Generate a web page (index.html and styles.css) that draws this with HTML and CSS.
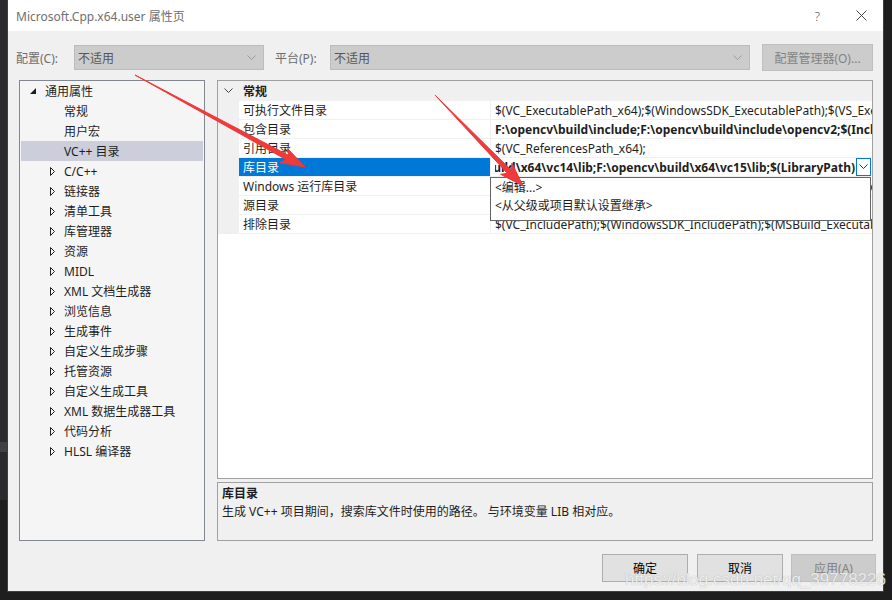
FILE: index.html
```html
<!DOCTYPE html>
<html lang="zh-CN">
<head>
<meta charset="utf-8">
<title>Microsoft.Cpp.x64.user 属性页</title>
<link rel="stylesheet" href="styles.css">
</head>
<body>
<div class="screen">
  <div class="strip-left"></div>
  <div class="dialog">
    <div class="titlebar">
      <span class="title">Microsoft.Cpp.x64.user 属性页</span>
      <span class="help">?</span>
      <svg class="close" width="11" height="11" viewBox="0 0 11 11"><path d="M0.5 0.5 L10.5 10.5 M10.5 0.5 L0.5 10.5" stroke="#444" stroke-width="1" fill="none"/></svg>
    </div>
    <div class="body">
      <div class="config-row">
        <span class="label lbl-config">配置(C):</span>
        <div class="combo combo-config"><span>不适用</span><svg class="chev" width="9" height="6" viewBox="0 0 9 6"><path d="M0.5 0.5 L4.5 4.5 L8.5 0.5" stroke="#9a9a9a" fill="none"/></svg></div>
        <span class="label lbl-platform">平台(P):</span>
        <div class="combo combo-platform"><span>不适用</span><svg class="chev" width="9" height="6" viewBox="0 0 9 6"><path d="M0.5 0.5 L4.5 4.5 L8.5 0.5" stroke="#9a9a9a" fill="none"/></svg></div>
        <div class="btn btn-disabled btn-manager">配置管理器(O)...</div>
      </div>
      <div class="main">
        <div class="tree">
          <div class="item lvl0"><span class="twisty"><svg width="7" height="7" viewBox="0 0 7 7"><path d="M6 0 L6 6 L0 6 Z" fill="#1e1e1e"/></svg></span>通用属性</div>
          <div class="item leaf">常规</div>
          <div class="item leaf">用户宏</div>
          <div class="item leaf selected">VC++ 目录</div>
          <div class="item lvl1"><span class="twisty"><svg width="7" height="9" viewBox="0 0 7 9"><path d="M1.5 0.5 L5.5 4.5 L1.5 8.5 Z" fill="none" stroke="#1e1e1e"/></svg></span>C/C++</div>
          <div class="item lvl1"><span class="twisty"><svg width="7" height="9" viewBox="0 0 7 9"><path d="M1.5 0.5 L5.5 4.5 L1.5 8.5 Z" fill="none" stroke="#1e1e1e"/></svg></span>链接器</div>
          <div class="item lvl1"><span class="twisty"><svg width="7" height="9" viewBox="0 0 7 9"><path d="M1.5 0.5 L5.5 4.5 L1.5 8.5 Z" fill="none" stroke="#1e1e1e"/></svg></span>清单工具</div>
          <div class="item lvl1"><span class="twisty"><svg width="7" height="9" viewBox="0 0 7 9"><path d="M1.5 0.5 L5.5 4.5 L1.5 8.5 Z" fill="none" stroke="#1e1e1e"/></svg></span>库管理器</div>
          <div class="item lvl1"><span class="twisty"><svg width="7" height="9" viewBox="0 0 7 9"><path d="M1.5 0.5 L5.5 4.5 L1.5 8.5 Z" fill="none" stroke="#1e1e1e"/></svg></span>资源</div>
          <div class="item lvl1"><span class="twisty"><svg width="7" height="9" viewBox="0 0 7 9"><path d="M1.5 0.5 L5.5 4.5 L1.5 8.5 Z" fill="none" stroke="#1e1e1e"/></svg></span>MIDL</div>
          <div class="item lvl1"><span class="twisty"><svg width="7" height="9" viewBox="0 0 7 9"><path d="M1.5 0.5 L5.5 4.5 L1.5 8.5 Z" fill="none" stroke="#1e1e1e"/></svg></span>XML 文档生成器</div>
          <div class="item lvl1"><span class="twisty"><svg width="7" height="9" viewBox="0 0 7 9"><path d="M1.5 0.5 L5.5 4.5 L1.5 8.5 Z" fill="none" stroke="#1e1e1e"/></svg></span>浏览信息</div>
          <div class="item lvl1"><span class="twisty"><svg width="7" height="9" viewBox="0 0 7 9"><path d="M1.5 0.5 L5.5 4.5 L1.5 8.5 Z" fill="none" stroke="#1e1e1e"/></svg></span>生成事件</div>
          <div class="item lvl1"><span class="twisty"><svg width="7" height="9" viewBox="0 0 7 9"><path d="M1.5 0.5 L5.5 4.5 L1.5 8.5 Z" fill="none" stroke="#1e1e1e"/></svg></span>自定义生成步骤</div>
          <div class="item lvl1"><span class="twisty"><svg width="7" height="9" viewBox="0 0 7 9"><path d="M1.5 0.5 L5.5 4.5 L1.5 8.5 Z" fill="none" stroke="#1e1e1e"/></svg></span>托管资源</div>
          <div class="item lvl1"><span class="twisty"><svg width="7" height="9" viewBox="0 0 7 9"><path d="M1.5 0.5 L5.5 4.5 L1.5 8.5 Z" fill="none" stroke="#1e1e1e"/></svg></span>自定义生成工具</div>
          <div class="item lvl1"><span class="twisty"><svg width="7" height="9" viewBox="0 0 7 9"><path d="M1.5 0.5 L5.5 4.5 L1.5 8.5 Z" fill="none" stroke="#1e1e1e"/></svg></span>XML 数据生成器工具</div>
          <div class="item lvl1"><span class="twisty"><svg width="7" height="9" viewBox="0 0 7 9"><path d="M1.5 0.5 L5.5 4.5 L1.5 8.5 Z" fill="none" stroke="#1e1e1e"/></svg></span>代码分析</div>
          <div class="item lvl1"><span class="twisty"><svg width="7" height="9" viewBox="0 0 7 9"><path d="M1.5 0.5 L5.5 4.5 L1.5 8.5 Z" fill="none" stroke="#1e1e1e"/></svg></span>HLSL 编译器</div>
        </div>
        <div class="right">
          <div class="grid">
            <div class="cat"><svg class="cat-chev" width="9" height="6" viewBox="0 0 9 6"><path d="M0.5 0.5 L4.5 4.5 L8.5 0.5" stroke="#444" fill="none"/></svg><span class="cat-name">常规</span></div>
            <div class="prow"><span class="gut"></span><span class="name">可执行文件目录</span><span class="val">$(VC_ExecutablePath_x64);$(WindowsSDK_ExecutablePath);$(VS_ExecutablePath);$(MSBuild_ExecutablePath);$(FxCopDir);$(PATH);</span></div>
            <div class="prow"><span class="gut"></span><span class="name">包含目录</span><span class="val bold">F:\opencv\build\include;F:\opencv\build\include\opencv2;$(IncludePath)</span></div>
            <div class="prow"><span class="gut"></span><span class="name">引用目录</span><span class="val">$(VC_ReferencesPath_x64);</span></div>
            <div class="prow"><span class="gut"></span><span class="name sel">库目录</span><span class="val val-edit"><span class="edit-text"><span class="bold">F:\opencv\build\x64\vc14\lib;F:\opencv\build\x64\vc15\lib;$(LibraryPath)</span></span><span class="drop-btn"><svg width="9" height="6" viewBox="0 0 9 6"><path d="M0.5 0.5 L4.5 4.5 L8.5 0.5" stroke="#333" fill="none"/></svg></span></span></div>
            <div class="prow"><span class="gut"></span><span class="name">Windows 运行库目录</span><span class="val">$(VC_ExecutablePath_x64);$(WindowsSDK_ExecutablePath);$(VS_ExecutablePath);</span></div>
            <div class="prow"><span class="gut"></span><span class="name">源目录</span><span class="val">$(VC_SourcePath);</span></div>
            <div class="prow"><span class="gut"></span><span class="name">排除目录</span><span class="val">$(VC_IncludePath);$(WindowsSDK_IncludePath);$(MSBuild_ExecutablePath);$(VC_LibraryPath_x64);</span></div>
            <div class="dropdown">
              <div class="opt">&lt;编辑...&gt;</div>
              <div class="opt">&lt;从父级或项目默认设置继承&gt;</div>
            </div>
          </div>
          <div class="desc">
            <div class="desc-title">库目录</div>
            <div class="desc-text">生成 VC++ 项目期间，搜索库文件时使用的路径。 与环境变量 LIB 相对应。</div>
          </div>
        </div>
      </div>
      <div class="buttons">
        <div class="btn btn-ok">确定</div>
        <div class="btn btn-cancel">取消</div>
        <div class="btn btn-disabled btn-apply">应用(A)</div>
      </div>
    </div>
  </div>
  <div class="strip-right"></div>
  <svg class="arrows" width="892" height="600" viewBox="0 0 892 600">
    <path d="M135 75 L288.6 155.3 L287.7 148.6 L305 167 L280.1 162.6 L286.2 159.7 Z" fill="#ee3a3a" stroke="#ee3a3a" stroke-width="1" stroke-linejoin="round"/>
    <path d="M435 95 L510.9 169.9 L512 163.1 L523 186 L500.6 174.3 L507.3 173.3 Z" fill="#ee3a3a" stroke="#ee3a3a" stroke-width="1" stroke-linejoin="round"/>
  </svg>
  <div class="watermark">https://blog.csdn.net/qq_39778226</div>
</div>
</body>
</html>
```

FILE: styles.css
```css
html, body {
  margin: 0;
  padding: 0;
  background: #1e1e1e;
}
body {
  font-family: "Noto Sans", "Noto Sans CJK SC", sans-serif;
  font-size: 12px;
  color: #1e1e1e;
}
.screen {
  position: relative;
  width: 892px;
  height: 600px;
  display: flex;
  align-items: flex-start;
  overflow: hidden;
}
.strip-left {
  width: 7px;
  height: 600px;
  background: linear-gradient(to bottom, #2b2b2e 0, #2b2b2e 442px, #3f3f44 442px, #3f3f44 452px, #2a2a2c 452px, #2a2a2c 500px, #1e1e1e 500px);
}
.strip-right {
  flex: 1;
  height: 600px;
  background: #1e1e1e;
}
.dialog {
  width: 877px;
  height: 592px;
  box-sizing: border-box;
  border: 1px solid #3f3f3f;
  border-top: none;
  background: #f0f0f0;
  display: flex;
  flex-direction: column;
}
.titlebar {
  height: 31px;
  background: #ffffff;
  display: flex;
  align-items: center;
  padding-left: 8px;
}
.title {
  flex: 1;
  color: #6f6f6f;
  font-size: 12px;
}
.help {
  color: #555;
  font-size: 13px;
  font-weight: 300;
  margin-right: 36px;
}
.close {
  margin-right: 16px;
}
.body {
  flex: 1;
  display: flex;
  flex-direction: column;
}
.config-row {
  display: flex;
  align-items: center;
  height: 27px;
  margin-top: 13px;
  padding-left: 8px;
}
.label {
  color: #6d6d6d;
}
.lbl-config { width: 58px; }
.lbl-platform { width: 55px; margin-left: 11px; }
.combo {
  height: 25px;
  box-sizing: border-box;
  background: #cccccc;
  border: 1px solid #bcbcbc;
  display: flex;
  align-items: center;
  justify-content: space-between;
  padding: 0 7px 0 3px;
  color: #555;
}
.combo-config { width: 190px; }
.combo-platform { width: 420px; }
.btn {
  box-sizing: border-box;
  border: 1px solid #adadad;
  background: #e1e1e1;
  display: flex;
  align-items: center;
  justify-content: center;
  color: #000;
}
.btn-disabled {
  background: #cccccc;
  border-color: #bfbfbf;
  color: #838383;
}
.btn-manager {
  width: 111px;
  height: 27px;
  margin-left: 12px;
}
.main {
  display: flex;
  height: 461px;
  margin-top: 9px;
  padding-left: 11px;
  gap: 12px;
}
.tree {
  width: 186px;
  box-sizing: border-box;
  border: 1px solid #828790;
  background: #f5f5f5;
}
.item {
  height: 20px;
  margin: 0 1px;
  display: flex;
  align-items: center;
  white-space: nowrap;
}
.twisty {
  width: 15px;
  display: flex;
  align-items: center;
}
.lvl0 { padding-left: 9px; }
.lvl1 { padding-left: 28px; }
.leaf { padding-left: 43px; }
.selected { background: #cccedb; }
.right {
  width: 656px;
  display: flex;
  flex-direction: column;
  gap: 3px;
}
.grid {
  position: relative;
  height: 399px;
  box-sizing: border-box;
  border: 1px solid #a0a0a0;
  background: #ffffff;
}
.cat {
  height: 20px;
  display: flex;
  align-items: center;
  background: #f0f0f0;
}
.cat-chev { margin-left: 6px; }
.cat-name {
  font-weight: bold;
  margin-left: 10px;
}
.prow {
  display: flex;
  height: 19px;
  background: #f0f0f0;
}
.gut {
  width: 21px;
}
.name {
  width: 251px;
  height: 18px;
  background: #ffffff;
  box-sizing: border-box;
  padding-left: 4px;
  line-height: 20px;
  white-space: nowrap;
  overflow: hidden;
}
.name.sel {
  background: #0078d7;
  color: #ffffff;
}
.val {
  width: 381px;
  height: 18px;
  margin-left: 1px;
  background: #ffffff;
  box-sizing: border-box;
  padding-left: 4px;
  line-height: 20px;
  white-space: nowrap;
  overflow: hidden;
}
.bold { font-weight: bold; }
.val-edit {
  display: flex;
  padding-right: 1px;
}
.edit-text {
  flex: 1;
  display: flex;
  justify-content: flex-end;
  overflow: hidden;
  padding-right: 1px;
}
.drop-btn {
  width: 15px;
  height: 18px;
  box-sizing: border-box;
  border: 1px solid #0078d7;
  display: flex;
  align-items: center;
  justify-content: center;
  flex-shrink: 0;
}
.dropdown {
  position: absolute;
  left: 272px;
  top: 96px;
  width: 381px;
  height: 44px;
  box-sizing: border-box;
  border: 1px solid #646464;
  background: #ffffff;
  padding-top: 1px;
}
.opt {
  height: 18px;
  line-height: 18px;
  padding-left: 4px;
}
.desc {
  height: 59px;
  box-sizing: border-box;
  border: 1px solid #a0a0a0;
  background: #f0f0f0;
  padding: 2px 4px;
}
.desc-title {
  font-weight: bold;
  line-height: 18px;
}
.desc-text {
  line-height: 18px;
}
.buttons {
  display: flex;
  justify-content: flex-end;
  margin-top: 13px;
  padding-right: 7px;
}
.buttons .btn {
  height: 28px;
}
.btn-ok { width: 86px; }
.btn-cancel { width: 86px; margin-left: 9px; }
.btn-apply { width: 85px; margin-left: 8px; }
.arrows {
  position: absolute;
  left: 0;
  top: 0;
  pointer-events: none;
}
.watermark {
  position: absolute;
  right: 6px;
  top: 570px;
  font-family: "Liberation Sans", sans-serif;
  font-size: 17px;
  color: rgba(255, 255, 255, 0.8);
  text-shadow: 0 0 1px rgba(120, 120, 120, 0.6);
}
```
